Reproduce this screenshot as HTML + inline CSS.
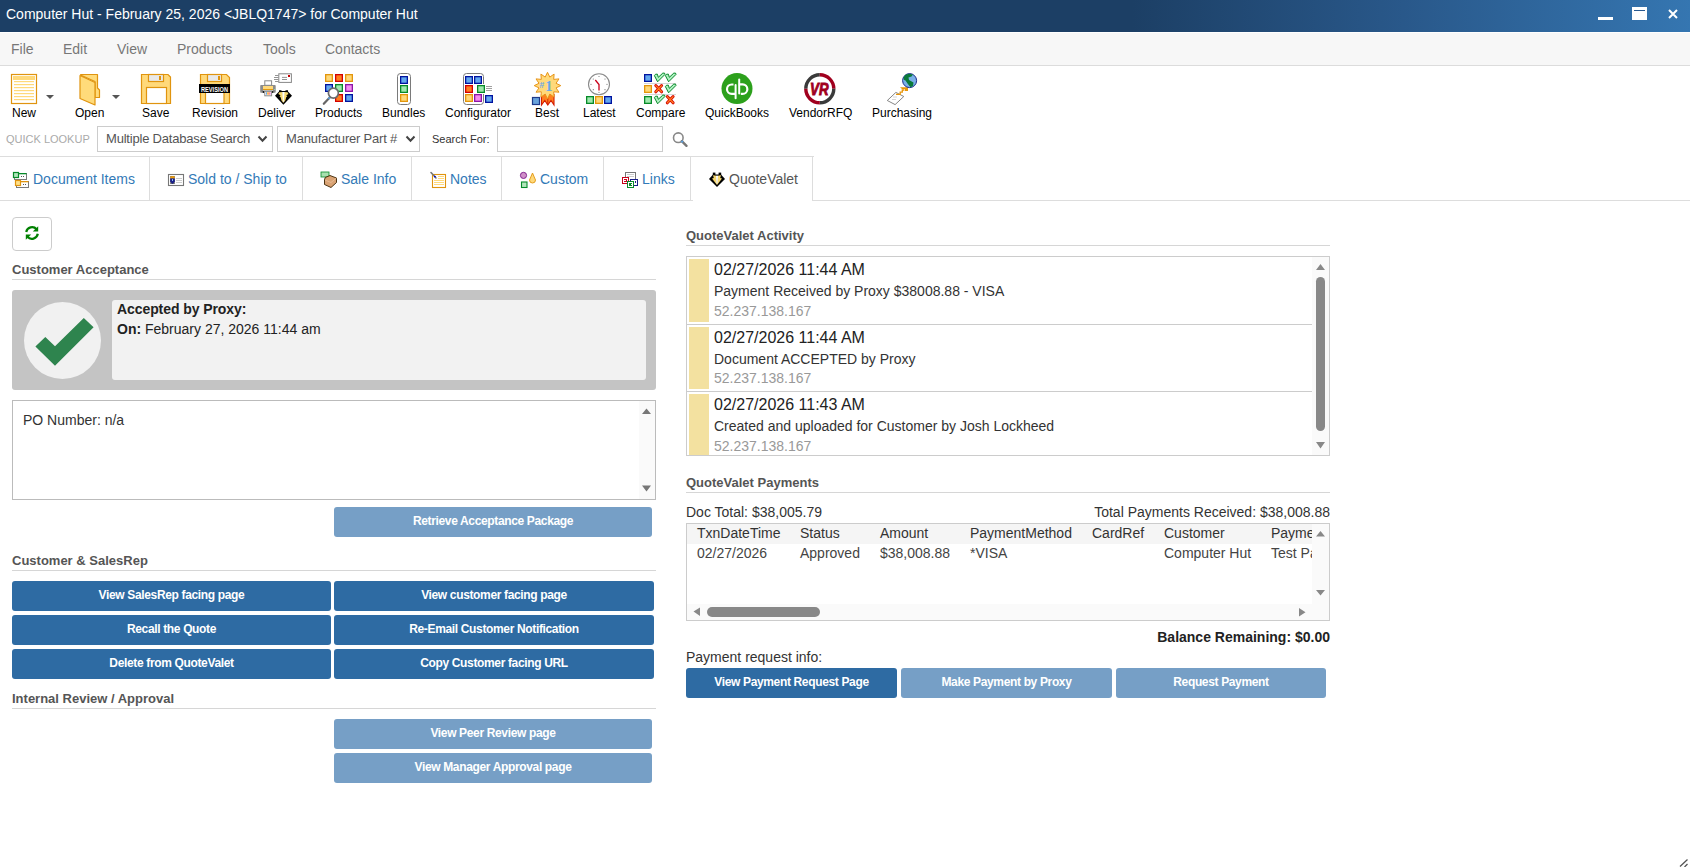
<!DOCTYPE html>
<html><head><meta charset="utf-8">
<style>
*{box-sizing:border-box;margin:0;padding:0}
html,body{width:1690px;height:867px;overflow:hidden;background:#fff;font-family:"Liberation Sans",sans-serif;color:#333;position:relative}
.a{position:absolute;white-space:nowrap}
#title{left:0;top:0;width:1690px;height:32px;background:linear-gradient(90deg,#1c3f65 0%,#1c3f65 67%,#29588a 83%,#3576b1 100%)}
#title .t{left:6px;top:6px;color:#fff;font-size:14px}
#menubar{left:0;top:33px;width:1690px;height:33px;background:#f7f7f7;border-bottom:1px solid #dcdcdc}
.menu{top:8px;font-size:14px;color:#777}
.tb{font-size:12px;color:#000;top:106px}
.ql{font-size:11px;color:#aaa;left:6px;top:133px}
.sel{border:1px solid #ccc;height:26px;top:126px;font-size:13px;color:#555;padding:4px 0 0 8px;background:#fff;letter-spacing:-0.2px}
.chev{top:135px;width:11px;height:8px}
.tabs{left:0;top:156px;width:814px;height:1px;background:#ddd}
.tabline{top:200px;height:1px;background:#ddd}
.tab{top:157px;height:43px;border-right:1px solid #ddd;font-size:14px;color:#337ab7;padding-top:14px}
.h{font-size:13px;font-weight:bold;color:#555}
.hl{height:1px;background:#d6d6d6}
.btn{height:30px;border-radius:3px;color:#fff;font-size:12px;font-weight:bold;text-align:center;padding-top:7px;letter-spacing:-0.35px}
.dk{background:#2e6ba3}
.lt{background:#769fc6}
.act{left:687px;width:625px;height:67px}
.bar{left:689px;width:20px;background:#f3e1a0}
.d16{font-size:16px;color:#222;left:714px}
.d14{font-size:14px;color:#333;left:714px}
.ip{font-size:14px;color:#999;left:714px}
.sep{left:687px;width:625px;height:1px;background:#ccc}
.gh{top:526px;font-size:14px;color:#333}
.gd{top:546px;font-size:14px;color:#444}
</style></head><body>
<div id="title" class="a"><div class="a t">Computer Hut - February 25, 2026 &lt;JBLQ1747&gt; for Computer Hut</div>
<div class="a" style="left:1598px;top:17px;width:15px;height:3px;background:#fff"></div>
<div class="a" style="left:1632px;top:7px;width:15px;height:13px;background:#fff"></div>
<div class="a" style="left:1634px;top:10px;width:11px;height:1px;background:#2a5a90"></div>
<svg class="a" style="left:1666px;top:8px" width="14" height="12" viewBox="0 0 14 12"><path d="M3,2 L11,10 M11,2 L3,10" stroke="#fff" stroke-width="2"/></svg>
</div>
<div id="menubar" class="a">
<div class="a menu" style="left:11px">File</div>
<div class="a menu" style="left:63px">Edit</div>
<div class="a menu" style="left:117px">View</div>
<div class="a menu" style="left:177px">Products</div>
<div class="a menu" style="left:263px">Tools</div>
<div class="a menu" style="left:325px">Contacts</div>
</div>

<svg class="a" style="left:0;top:0" width="1000" height="210" viewBox="0 0 1000 210">

<!-- New -->
<rect x="11.5" y="74.5" width="25" height="29" fill="#fff" stroke="#e0940f" stroke-width="1.2"/>
<rect x="13" y="76" width="22" height="4" fill="#ffd97a"/>
<g fill="#ffd97a"><rect x="14" y="81" width="20" height="1.2"/><rect x="14" y="84" width="20" height="1.2"/><rect x="14" y="87" width="20" height="1.2"/><rect x="14" y="90" width="20" height="1.2"/><rect x="14" y="93" width="20" height="1.2"/><rect x="14" y="96" width="20" height="1.2"/><rect x="14" y="99" width="20" height="1.2"/></g>
<path d="M46,95 H54 L50,99 Z" fill="#555"/>
<!-- Open -->
<path d="M81,74.5 H97.5 V88 L99.5,90 V97.5 H95 V81.5 L80.5,75 Z" fill="#ffdb7a" stroke="#e0940f" stroke-width="1.2" stroke-linejoin="round"/>
<path d="M80,75.5 L95,82.5 V105 L80,98.5 Z" fill="#ffdb7a" stroke="#e0940f" stroke-width="1.2" stroke-linejoin="round"/>
<path d="M112,95 H120 L116,99 Z" fill="#555"/>
<!-- Save -->
<path d="M141.5,74.5 H168 L170.5,77 V103.5 H141.5 Z" fill="#ffd97a" stroke="#e0940f" stroke-width="1.2"/>
<rect x="148.5" y="74.5" width="15" height="7" fill="#e9e9e9" stroke="#e0940f" stroke-width="1.2"/>
<rect x="159" y="76" width="2" height="4" fill="#e0940f"/>
<rect x="146.5" y="87.5" width="20" height="16" fill="#fff" stroke="#e0940f" stroke-width="1.2"/>
<!-- Revision -->
<path d="M200.5,74.5 H226.5 L229.5,77.5 V103.5 H200.5 Z" fill="#ffd97a" stroke="#e0940f" stroke-width="1.2"/>
<rect x="207.5" y="74.5" width="14" height="7" fill="#e9e9e9" stroke="#e0940f" stroke-width="1.2"/>
<rect x="218" y="76" width="2" height="4" fill="#e0940f"/>
<rect x="205.5" y="90" width="18.5" height="13.5" fill="#fff" stroke="#e0940f" stroke-width="1.2"/>
<rect x="199" y="84" width="31" height="9" fill="#000"/>
<text x="201" y="91.6" font-family="Liberation Sans" font-weight="bold" font-size="8" fill="#fff" textLength="27" lengthAdjust="spacingAndGlyphs">REVISION</text>
<!-- Deliver -->
<rect x="264.8" y="80.8" width="6.8" height="4.5" fill="#fff" stroke="#888" stroke-width="1"/>
<rect x="260.2" y="85.1" width="15.5" height="7.7" rx="0.8" fill="#8c8c8c"/>
<rect x="263" y="86" width="10" height="3" fill="#ffd97a"/>
<rect x="263" y="89" width="10" height="1.2" fill="#e39a12"/>
<rect x="263" y="90.2" width="10" height="0.8" fill="#ccc"/>
<circle cx="263.5" cy="92" r="0.9" fill="#111"/><circle cx="272.5" cy="92" r="0.9" fill="#111"/>
<rect x="274.2" y="89" width="1" height="1" fill="#9fe9ae"/>
<rect x="264.8" y="91.3" width="6.8" height="4.5" fill="#fff" stroke="#888" stroke-width="1"/>
<rect x="266" y="92.2" width="1" height="2.5" fill="#63a8ef"/><rect x="267.2" y="92.2" width="1.2" height="2.5" fill="#ffb020"/><rect x="268.5" y="92.2" width="1.2" height="2.5" fill="#ff6a2a"/><rect x="269.7" y="92.2" width="1" height="2.5" fill="#f08ae0"/>
<rect x="278.8" y="73.8" width="12.6" height="8.6" fill="#fff" stroke="#888" stroke-width="1"/>
<rect x="288" y="75" width="2" height="2" fill="#c80000"/>
<g stroke="#888" stroke-width="0.9"><path d="M282,77.4 H287 M282,79.5 H287 M275,75.5 H278.5 M274,77.5 H278.5 M274,79.5 H278.5 M275,81.5 H278.5"/></g>
<path d="M275,95.8 L279,91.5 V90.2 H281.5 V91 H285.5 V90.2 H288 V91.5 L292,95.8 L283.4,104.8 Z" fill="#000"/>
<path d="M279.3,92.3 L282.8,92 L283.4,103 L281.5,100.5 L280.5,97 L279.5,96.5 L280.5,95.3 L278.3,94 Z" fill="#f6d870"/>
<path d="M287.5,92.3 L284,92 L283.4,103 L285.3,100.5 L286.3,97 L287.3,96.5 L286.3,95.3 L288.5,94 Z" fill="#f6d870"/>
<path d="M282.3,92 H284.5 L283.8,102 H283 Z" fill="#fff"/>
<!-- Products -->
<g transform="translate(325,74)"><rect x="0.65" y="0.65" width="6.7" height="6.7" fill="#ffd97a" stroke="#e3960c" stroke-width="1.3"/></g><g transform="translate(335,74)"><rect x="0.65" y="0.65" width="6.7" height="6.7" fill="#ff7f1f" stroke="#d40000" stroke-width="1.3"/></g><g transform="translate(345,74)"><rect x="0.65" y="0.65" width="6.7" height="6.7" fill="#ffd97a" stroke="#e3960c" stroke-width="1.3"/></g>
<g transform="translate(325,84)"><rect x="0.65" y="0.65" width="6.7" height="6.7" fill="#63a8ef" stroke="#00139f" stroke-width="1.3"/></g><g transform="translate(335,84)"><rect x="0.65" y="0.65" width="6.7" height="6.7" fill="#9fe9ae" stroke="#078a29" stroke-width="1.3"/></g><g transform="translate(345,84)"><rect x="0.65" y="0.65" width="6.7" height="6.7" fill="#f58df1" stroke="#8d16a6" stroke-width="1.3"/></g>
<g transform="translate(335,94)"><rect x="0.65" y="0.65" width="6.7" height="6.7" fill="#ff7f1f" stroke="#d40000" stroke-width="1.3"/></g><g transform="translate(345,94)"><rect x="0.65" y="0.65" width="6.7" height="6.7" fill="#63a8ef" stroke="#00139f" stroke-width="1.3"/></g>
<path d="M323.8,103.8 L329.5,97.8" stroke="#666" stroke-width="2.2" stroke-linecap="round"/>
<path d="M328.5,98.8 L330.5,96.5" stroke="#5aa0e0" stroke-width="2"/>
<circle cx="333.4" cy="93.1" r="5" fill="#fff" stroke="#6b6b6b" stroke-width="1.7"/>
<!-- Bundles -->
<rect x="397.5" y="73.5" width="13" height="31" rx="3" fill="none" stroke="#7a7a7a" stroke-width="1"/>
<g transform="translate(400,76)"><rect x="0.65" y="0.65" width="6.7" height="6.7" fill="#63a8ef" stroke="#00139f" stroke-width="1.3"/></g><g transform="translate(400,85)"><rect x="0.65" y="0.65" width="6.7" height="6.7" fill="#9fe9ae" stroke="#078a29" stroke-width="1.3"/></g><g transform="translate(400,94)"><rect x="0.65" y="0.65" width="6.7" height="6.7" fill="#ffd97a" stroke="#e3960c" stroke-width="1.3"/></g>
<!-- Configurator -->
<rect x="463.5" y="73.5" width="20" height="31" rx="3" fill="none" stroke="#7a7a7a" stroke-width="1"/>
<rect x="475" y="84" width="18" height="10" fill="#fff"/>
<rect x="484" y="94" width="10" height="10" fill="#fff"/>
<g transform="translate(465,76)"><rect x="0.65" y="0.65" width="6.7" height="6.7" fill="#63a8ef" stroke="#00139f" stroke-width="1.3"/></g><g transform="translate(474,76)"><rect x="0.65" y="0.65" width="6.7" height="6.7" fill="#63a8ef" stroke="#00139f" stroke-width="1.3"/></g>
<g transform="translate(465,85)"><rect x="0.65" y="0.65" width="6.7" height="6.7" fill="#ff7f1f" stroke="#d40000" stroke-width="1.3"/></g><g transform="translate(477,85)"><rect x="0.65" y="0.65" width="6.7" height="6.7" fill="#9fe9ae" stroke="#078a29" stroke-width="1.3"/></g>
<g transform="translate(465,94)"><rect x="0.65" y="0.65" width="6.7" height="6.7" fill="#ffd97a" stroke="#e3960c" stroke-width="1.3"/></g><g transform="translate(474,94)"><rect x="0.65" y="0.65" width="6.7" height="6.7" fill="#f58df1" stroke="#8d16a6" stroke-width="1.3"/></g><g transform="translate(485,95)"><rect x="0.65" y="0.65" width="6.7" height="6.7" fill="#63a8ef" stroke="#00139f" stroke-width="1.3"/></g>
<g stroke="#888" stroke-width="0.8"><path d="M486,86.5 H492 M486,88.5 H492 M486,90.5 H492"/></g>
<!-- Best -->
<path d="M541.5,94.5 V105 L544.8,100.5 L547.8,105 L551,100.5 L554,105 V94.5 Z" fill="#ff7f1f" stroke="#d41a00" stroke-width="1.1"/>
<path d="M547.8,95 V104" stroke="#d41a00" stroke-width="0.9"/>
<path d="M547.5,72.3 L549.8,77.1 L554.1,74.1 L553.7,79.4 L559.0,78.9 L556.0,83.3 L560.8,85.6 L556.0,87.9 L559.0,92.2 L553.7,91.8 L554.1,97.1 L549.8,94.1 L547.5,98.9 L545.2,94.1 L540.9,97.1 L541.3,91.8 L536.0,92.2 L539.0,87.9 L534.2,85.6 L539.0,83.3 L536.0,78.9 L541.3,79.4 L540.9,74.1 L545.2,77.1 Z" fill="#ffd97a" stroke="#e8961a" stroke-width="1"/>
<rect x="532.5" y="97.5" width="7" height="7" fill="#6aa3db" stroke="#1f3a8a" stroke-width="1.2"/>
<text x="539.5" y="88" font-family="Liberation Sans" font-weight="bold" font-size="8.5" fill="#6aa8e8">#</text><text x="545.3" y="91" font-family="Liberation Serif" font-weight="bold" font-size="14.5" fill="#6aa8e8">1</text>
<!-- Latest -->
<circle cx="599" cy="84.3" r="10.5" fill="#fff" stroke="#8a8a8a" stroke-width="1.1"/>
<g fill="#777"><circle cx="599" cy="76.5" r="0.6"/><circle cx="599" cy="92.3" r="0.6"/><circle cx="591" cy="84.3" r="0.6"/><circle cx="607" cy="84.3" r="0.6"/><circle cx="593.3" cy="79" r="0.6"/><circle cx="605" cy="79" r="0.6"/><circle cx="593.3" cy="89.7" r="0.6"/><circle cx="605" cy="89.7" r="0.6"/></g>
<path d="M599,90.5 V84.5 L595.3,80" stroke="#c8001a" stroke-width="1.3" fill="none"/>
<g transform="translate(586,96)"><rect x="0.65" y="0.65" width="6.7" height="6.7" fill="#9fe9ae" stroke="#078a29" stroke-width="1.3"/></g><g transform="translate(595,96)"><rect x="0.65" y="0.65" width="6.7" height="6.7" fill="#ffd97a" stroke="#e3960c" stroke-width="1.3"/></g><g transform="translate(604,96)"><rect x="0.65" y="0.65" width="6.7" height="6.7" fill="#63a8ef" stroke="#00139f" stroke-width="1.3"/></g>
<!-- Compare -->
<g transform="translate(644,74)"><rect x="0.65" y="0.65" width="6.7" height="6.7" fill="#63a8ef" stroke="#00139f" stroke-width="1.3"/></g><g transform="translate(644,85)"><rect x="0.65" y="0.65" width="6.7" height="6.7" fill="#ffd97a" stroke="#e3960c" stroke-width="1.3"/></g><g transform="translate(644,96)"><rect x="0.65" y="0.65" width="6.7" height="6.7" fill="#9fe9ae" stroke="#078a29" stroke-width="1.3"/></g>
<rect x="644" y="83.2" width="32" height="0.8" fill="#ccc"/><rect x="644" y="94.1" width="32" height="0.8" fill="#ccc"/>
<g transform="translate(654,73)"><path d="M0.4,2.6 L1.6,1.2 H3.4 L4.3,4.3 L8.8,0.1 H10.5 L11,1.4 L3.6,8.8 Z" fill="#aef0c0" stroke="#078a29" stroke-width="1" stroke-linejoin="round"/></g><g transform="translate(665,73)"><path d="M0.4,2.6 L1.6,1.2 H3.4 L4.3,4.3 L8.8,0.1 H10.5 L11,1.4 L3.6,8.8 Z" fill="#aef0c0" stroke="#078a29" stroke-width="1" stroke-linejoin="round"/></g>
<g transform="translate(654,84)"><path d="M1.8,1.6 L7.6,7.8 M7.6,1.6 L1.8,7.8" stroke="#d40000" stroke-width="3" stroke-linecap="round"/><path d="M1.8,1.6 L7.6,7.8 M7.6,1.6 L1.8,7.8" stroke="#ff8020" stroke-width="1.3" stroke-linecap="round"/></g><g transform="translate(665,84)"><path d="M0.4,2.6 L1.6,1.2 H3.4 L4.3,4.3 L8.8,0.1 H10.5 L11,1.4 L3.6,8.8 Z" fill="#aef0c0" stroke="#078a29" stroke-width="1" stroke-linejoin="round"/></g>
<g transform="translate(654,95)"><path d="M0.4,2.6 L1.6,1.2 H3.4 L4.3,4.3 L8.8,0.1 H10.5 L11,1.4 L3.6,8.8 Z" fill="#aef0c0" stroke="#078a29" stroke-width="1" stroke-linejoin="round"/></g><g transform="translate(665.5,95)"><path d="M1.8,1.6 L7.6,7.8 M7.6,1.6 L1.8,7.8" stroke="#d40000" stroke-width="3" stroke-linecap="round"/><path d="M1.8,1.6 L7.6,7.8 M7.6,1.6 L1.8,7.8" stroke="#ff8020" stroke-width="1.3" stroke-linecap="round"/></g>
<!-- QuickBooks -->
<circle cx="737" cy="88.6" r="15.5" fill="#2ca01c"/>
<g fill="none" stroke="#fff" stroke-width="2.2"><path d="M735.6,93.9 H731.7 A4.7,4.7 0 0 1 731.7,84.5 H733.5"/><path d="M738.8,84.4 H742.6 A4.7,4.7 0 0 1 742.6,93.9 H740.8"/></g>
<g stroke="#fff" stroke-width="2" stroke-linecap="round"><path d="M735.6,85 V98.3"/><path d="M739.2,79.5 V93.5"/></g>
<!-- VendorRFQ -->
<g fill="none" stroke-width="3.4">
<path d="M805.8,88.8 A14,14 0 0 1 819.8,74.8" stroke="#3a3a3a"/>
<path d="M819.8,74.8 A14,14 0 0 1 833.8,88.8" stroke="#a0001e"/>
<path d="M833.8,88.8 A14,14 0 0 1 819.8,102.8" stroke="#3a3a3a"/>
<path d="M819.8,102.8 A14,14 0 0 1 805.8,88.8" stroke="#a0001e"/>
</g>
<text x="810" y="95.2" font-family="Liberation Sans" font-weight="bold" font-style="italic" font-size="17" fill="#a0001e" stroke="#a0001e" stroke-width="0.9" textLength="18.5" lengthAdjust="spacingAndGlyphs">VR</text>
<!-- Purchasing -->
<path d="M887.3,100.5 L895.9,92.4 L903.8,96.5 L895.1,104.6 Z" fill="#fff" stroke="#777" stroke-width="0.9"/>
<g stroke="#ccc" stroke-width="0.8"><path d="M893,97 H897 M892,99.5 H896"/></g>
<path d="M896,94.3 H900.2 V92.2 H902.3 V90 H904.5" fill="none" stroke="#e8960a" stroke-width="1.3"/><path d="M900,87.2 H908 V91 H905 V89 L902,89 Z" fill="#e8960a"/>
<circle cx="909.6" cy="80.6" r="7" fill="#7ab0e8" stroke="#1a2a8a" stroke-width="1"/>
<path d="M903.5,78 L905,75 L909,73.8 L913,74.5 L911.5,76.5 L908.5,77.5 L909,80 L913.5,82.5 L913,86 L910.5,87.3 L907.5,83.5 L905.5,80.5 L904,80 Z" fill="#0a7a3a"/>
</svg>


<div class="a tb" style="left:12px">New</div>
<div class="a tb" style="left:75px">Open</div>
<div class="a tb" style="left:142px">Save</div>
<div class="a tb" style="left:192px">Revision</div>
<div class="a tb" style="left:258px">Deliver</div>
<div class="a tb" style="left:315px">Products</div>
<div class="a tb" style="left:382px">Bundles</div>
<div class="a tb" style="left:445px">Configurator</div>
<div class="a tb" style="left:535px">Best</div>
<div class="a tb" style="left:583px">Latest</div>
<div class="a tb" style="left:636px">Compare</div>
<div class="a tb" style="left:705px">QuickBooks</div>
<div class="a tb" style="left:789px">VendorRFQ</div>
<div class="a tb" style="left:872px">Purchasing</div>

<div class="a ql">QUICK LOOKUP</div>
<div class="a sel" style="left:97px;width:176px">Multiple Database Search</div>
<svg class="a chev" style="left:257px" viewBox="0 0 11 8"><path d="M1.5,1.5 L5.5,5.8 L9.5,1.5" fill="none" stroke="#444" stroke-width="2"/></svg>
<div class="a sel" style="left:277px;width:143px">Manufacturer Part #</div>
<svg class="a chev" style="left:405px" viewBox="0 0 11 8"><path d="M1.5,1.5 L5.5,5.8 L9.5,1.5" fill="none" stroke="#444" stroke-width="2"/></svg>
<div class="a" style="left:432px;top:133px;font-size:11px;color:#333">Search For:</div>
<div class="a" style="left:497px;top:126px;width:166px;height:26px;border:1px solid #ccc"></div>
<svg class="a" style="left:670px;top:130px" width="20" height="18" viewBox="0 0 20 18"><circle cx="8.3" cy="7.7" r="4.8" fill="none" stroke="#888" stroke-width="1.6"/><path d="M11.8,11.2 L16.5,15.8" stroke="#777" stroke-width="2.4" stroke-linecap="round"/><path d="M11.5,11 L12.8,12.3" stroke="#5aa0e0" stroke-width="2"/></svg>

<div class="a tabs"></div>
<div class="a tabline" style="left:0;width:693px"></div>
<div class="a tabline" style="left:812px;width:878px"></div>
<div class="a tab" style="left:0;width:150px;padding-left:33px">Document Items</div>
<div class="a tab" style="left:150px;width:153px;padding-left:38px">Sold to / Ship to</div>
<div class="a tab" style="left:303px;width:109px;padding-left:38px">Sale Info</div>
<div class="a tab" style="left:412px;width:90px;padding-left:38px">Notes</div>
<div class="a tab" style="left:502px;width:102px;padding-left:38px">Custom</div>
<div class="a tab" style="left:604px;width:87px;padding-left:38px">Links</div>
<div class="a tab" style="left:691px;width:122px;padding-left:38px;color:#555">QuoteValet</div>
<div class="a" style="left:690px;top:157px;width:1px;height:44px;background:#ddd"></div>

<svg class="a" style="left:0;top:160px" width="760" height="40" viewBox="0 160 760 40">
<!-- Document Items -->
<rect x="14.5" y="173.5" width="12" height="6" fill="#fff" stroke="#7a7a7a" stroke-width="1"/>
<rect x="18" y="173" width="8.5" height="1.3" fill="#078a29"/>
<rect x="13.5" y="172.5" width="5" height="5" fill="#b2e5bc" stroke="#078a29" stroke-width="1.2"/>
<rect x="21" y="176" width="1" height="1" fill="#555"/><rect x="23" y="176" width="1" height="1" fill="#555"/>
<rect x="16.5" y="181.5" width="12" height="6" fill="#fff" stroke="#7a7a7a" stroke-width="1"/>
<rect x="20" y="181" width="8.5" height="1.3" fill="#e0940f"/>
<rect x="15.5" y="180.5" width="5" height="5" fill="#ffe08a" stroke="#e0940f" stroke-width="1.2"/>
<rect x="23" y="184" width="1" height="1" fill="#555"/><rect x="25" y="184" width="1" height="1" fill="#555"/>
<!-- Sold to -->
<rect x="168.5" y="174.5" width="15" height="11" fill="#fff" stroke="#777" stroke-width="1.1"/>
<path d="M170.2,176 H174.8 V184 H170.2 Z" fill="#666"/>
<path d="M170.2,176.5 L172.5,176 L174.8,176.5 V178.5 H170.2 Z" fill="#e89a10"/>
<path d="M170.2,178.6 H174.8 V181.5 L172.5,184 L170.2,181.5 Z" fill="#1a1f8a"/>
<rect x="172" y="179" width="1" height="2" fill="#8ac0f0"/>
<g fill="#ccc"><rect x="176" y="178" width="6" height="1"/><rect x="176" y="180" width="6" height="1"/><rect x="176" y="182" width="6" height="1"/></g>
<!-- Sale Info -->
<rect x="321" y="172" width="8" height="5" fill="#a8e0b0" stroke="#078a29" stroke-width="0.8"/>
<path d="M325.2,177.5 L330,175.5 L336.5,178 V182.5 L331,187.5 L324.5,184.5 V180 Z" fill="#d9a273" stroke="#3a2200" stroke-width="0.9"/>
<path d="M325,180 L331,182.5 L336.5,178" fill="none" stroke="#e8c09a" stroke-width="0.8"/>
<!-- Notes -->
<rect x="432.5" y="174.5" width="13" height="13" fill="#fff" stroke="#e0940f" stroke-width="1.1"/>
<g fill="#ffd97a"><rect x="438" y="176" width="6" height="1"/><rect x="438" y="178" width="6" height="1"/><rect x="434" y="180" width="10" height="1"/><rect x="434" y="182" width="10" height="1"/><rect x="434" y="184" width="10" height="1"/></g>
<path d="M431,172.5 L436,178" stroke="#777" stroke-width="1.6" stroke-linecap="round"/>
<path d="M434.3,176 L435.5,177.3" stroke="#0000c0" stroke-width="1.4"/>
<!-- Custom -->
<circle cx="523.5" cy="175.4" r="3.1" fill="#d090c8" stroke="#7a1a8a" stroke-width="0.9"/>
<rect x="521.5" y="182" width="5.5" height="5.5" fill="#b2e5bc" stroke="#078a29" stroke-width="1.1"/>
<path d="M532.5,173 L535.5,180 A2.9,2.9 0 1 1 529.5,180 Z" fill="#ffd97a" stroke="#e0940f" stroke-width="0.9"/>
<!-- Links -->
<rect x="625" y="172" width="11" height="8" fill="#777"/><rect x="626" y="173" width="9" height="7" fill="#fff"/>
<g fill="#ccc"><rect x="627" y="174" width="7" height="1"/><rect x="627" y="176" width="7" height="1"/></g>
<rect x="630" y="179" width="8" height="7" fill="#1a1f8a"/><rect x="631" y="180" width="6" height="5" fill="#fff"/>
<rect x="635" y="181" width="1" height="2" fill="#1a1f8a"/>
<rect x="622" y="177" width="7" height="7" fill="#c8001a"/><rect x="623" y="178" width="5" height="5" fill="#fff"/>
<rect x="624" y="179" width="3" height="1" fill="#c8001a"/><rect x="624" y="181" width="3" height="1" fill="#c8001a"/><rect x="626" y="179" width="1" height="3" fill="#c8001a"/>
<rect x="627" y="181" width="7" height="7" fill="#078a29"/><rect x="628" y="182" width="5" height="5" fill="#fff"/>
<rect x="629" y="183" width="3" height="3" fill="#078a29"/><rect x="631" y="184" width="1" height="1" fill="#fff"/>
<!-- QuoteValet -->
<path d="M709,178.9 L713,174.5 H721 L725,178.9 L717,186.9 Z" fill="#000"/>
<rect x="712.8" y="172.6" width="2.6" height="3" fill="#000"/><rect x="718.6" y="172.6" width="2.6" height="3" fill="#000"/>
<path d="M713,175.3 L716.5,175.8 L717,185 L712,178.5 L713.8,178 Z" fill="#f6d870"/>
<path d="M721,175.3 L717.5,175.8 L717,185 L722,178.5 L720.2,178 Z" fill="#f6d870"/>
<path d="M716,175.8 H718 L717.5,183.5 H716.5 Z" fill="#fff"/>
</svg>


<!-- left column -->
<div class="a" style="left:12px;top:217px;width:40px;height:34px;border:1px solid #ccc;border-radius:4px"></div>
<svg class="a" style="left:24px;top:225px" width="16" height="16" viewBox="0 0 16 16"><path d="M2.2,7 A6,6 0 0 1 12.6,4.2" fill="none" stroke="#008000" stroke-width="2.2"/><path d="M14.2,1.2 V6.6 H8.8 Z" fill="#008000"/><path d="M13.8,8.8 A6,6 0 0 1 3.4,11.8" fill="none" stroke="#008000" stroke-width="2.2"/><path d="M1.8,14.8 V9.4 H7.2 Z" fill="#008000"/></svg>
<div class="a h" style="left:12px;top:262px">Customer Acceptance</div>
<div class="a hl" style="left:12px;top:279px;width:644px"></div>
<div class="a" style="left:12px;top:290px;width:644px;height:100px;background:#c4c4c4;border-radius:3px"></div>
<div class="a" style="left:24px;top:302px;width:77px;height:77px;background:#f1f1f1;border-radius:50%"></div>
<svg class="a" style="left:30px;top:312px" width="70" height="60" viewBox="30 312 70 60"><path d="M35.4,346.5 L45.3,336.9 L55,346.2 L83.8,318 L93.6,327.2 L55,365.7 Z" fill="#2e844e"/></svg>
<div class="a" style="left:112px;top:300px;width:534px;height:80px;background:#f2f2f2;border-radius:3px"></div>
<div class="a" style="left:117px;top:301px;font-size:14px;font-weight:bold;color:#222;letter-spacing:-0.08px">Accepted by Proxy:</div>
<div class="a" style="left:117px;top:321px;font-size:14px;color:#222"><b>On:</b> February 27, 2026 11:44 am</div>
<div class="a" style="left:12px;top:400px;width:644px;height:100px;border:1px solid #bbb"></div>
<div class="a" style="left:639px;top:401px;width:16px;height:98px;background:#fafafa"></div>
<svg class="a" style="left:640px;top:404px" width="14" height="90" viewBox="0 0 14 90"><path d="M2,10 H11 L6.5,4.5 Z M2,81.5 H11 L6.5,87.5 Z" fill="#777"/></svg>
<div class="a" style="left:23px;top:412px;font-size:14px;color:#333">PO Number: n/a</div>
<div class="a btn lt" style="left:334px;top:507px;width:318px">Retrieve Acceptance Package</div>

<div class="a h" style="left:12px;top:553px">Customer &amp; SalesRep</div>
<div class="a hl" style="left:12px;top:570px;width:644px"></div>
<div class="a btn dk" style="left:12px;top:581px;width:319px">View SalesRep facing page</div>
<div class="a btn dk" style="left:334px;top:581px;width:320px">View customer facing page</div>
<div class="a btn dk" style="left:12px;top:615px;width:319px">Recall the Quote</div>
<div class="a btn dk" style="left:334px;top:615px;width:320px">Re-Email Customer Notification</div>
<div class="a btn dk" style="left:12px;top:649px;width:319px">Delete from QuoteValet</div>
<div class="a btn dk" style="left:334px;top:649px;width:320px">Copy Customer facing URL</div>

<div class="a h" style="left:12px;top:691px">Internal Review / Approval</div>
<div class="a hl" style="left:12px;top:708px;width:644px"></div>
<div class="a btn lt" style="left:334px;top:719px;width:318px">View Peer Review page</div>
<div class="a btn lt" style="left:334px;top:753px;width:318px">View Manager Approval page</div>

<!-- right column -->
<div class="a h" style="left:686px;top:228px">QuoteValet Activity</div>
<div class="a hl" style="left:686px;top:245px;width:644px"></div>
<div class="a" style="left:686px;top:256px;width:644px;height:200px;border:1px solid #ccc"></div>
<div class="a bar" style="top:259px;height:63px"></div>
<div class="a d16" style="top:261px">02/27/2026 11:44 AM</div>
<div class="a d14" style="top:283px">Payment Received by Proxy $38008.88 - VISA</div>
<div class="a ip" style="top:303px">52.237.138.167</div>
<div class="a sep" style="top:324px"></div>
<div class="a bar" style="top:327px;height:62px"></div>
<div class="a d16" style="top:329px">02/27/2026 11:44 AM</div>
<div class="a d14" style="top:351px">Document ACCEPTED by Proxy</div>
<div class="a ip" style="top:370px">52.237.138.167</div>
<div class="a sep" style="top:391px"></div>
<div class="a bar" style="top:394px;height:61px"></div>
<div class="a d16" style="top:396px">02/27/2026 11:43 AM</div>
<div class="a d14" style="top:418px">Created and uploaded for Customer by Josh Lockheed</div>
<div class="a ip" style="top:438px">52.237.138.167</div>
<div class="a" style="left:1312px;top:257px;width:17px;height:198px;background:#fafafa"></div>
<div class="a" style="left:1316px;top:277px;width:9px;height:154px;background:#888;border-radius:4.5px"></div>
<svg class="a" style="left:1314px;top:262px" width="14" height="190" viewBox="0 0 14 190"><path d="M2,8 H11 L6.5,2 Z M2,180 H11 L6.5,186.5 Z" fill="#888"/></svg>

<div class="a h" style="left:686px;top:475px">QuoteValet Payments</div>
<div class="a hl" style="left:686px;top:492px;width:644px"></div>
<div class="a" style="left:686px;top:504px;font-size:14px">Doc Total: $38,005.79</div>
<div class="a" style="left:1000px;top:504px;width:330px;text-align:right;font-size:14px">Total Payments Received: $38,008.88</div>
<div class="a" style="left:686px;top:523px;width:644px;height:98px;border:1px solid #ccc;overflow:hidden">
  <div class="a" style="left:0;top:0;width:625px;height:20px;background:#f5f5f5"></div>
  <div class="a" style="left:0;top:80px;width:625px;height:17px;background:#fafafa"></div>
  <div class="a" style="left:625px;top:0;width:18px;height:97px;background:#fafafa"></div>
  <div class="a" style="left:0;top:0;width:625px;height:80px;overflow:hidden">
    <div class="a gh" style="left:10px;top:1px">TxnDateTime</div>
    <div class="a gh" style="left:113px;top:1px">Status</div>
    <div class="a gh" style="left:193px;top:1px">Amount</div>
    <div class="a gh" style="left:283px;top:1px">PaymentMethod</div>
    <div class="a gh" style="left:405px;top:1px">CardRef</div>
    <div class="a gh" style="left:477px;top:1px">Customer</div>
    <div class="a gh" style="left:584px;top:1px">PaymentDescription</div>
    <div class="a gd" style="left:10px;top:21px">02/27/2026</div>
    <div class="a gd" style="left:113px;top:21px">Approved</div>
    <div class="a gd" style="left:193px;top:21px">$38,008.88</div>
    <div class="a gd" style="left:283px;top:21px">*VISA</div>
    <div class="a gd" style="left:477px;top:21px">Computer Hut</div>
    <div class="a gd" style="left:584px;top:21px">Test Payment</div>
  </div>
  <div class="a" style="left:20px;top:83px;width:113px;height:9.5px;background:#888;border-radius:5px"></div>
  <svg class="a" style="left:0;top:0" width="643" height="97" viewBox="0 0 643 97"><path d="M6.5,87.5 L13,83.5 V92 Z M612,84 V92.5 L618.5,88.25 Z M629,12.5 H638 L633.5,7 Z M629,66 H638 L633.5,71.5 Z" fill="#888"/></svg>
</div>
<div class="a" style="left:1000px;top:629px;width:330px;text-align:right;font-size:14px;font-weight:bold;color:#222">Balance Remaining: $0.00</div>
<div class="a" style="left:686px;top:649px;font-size:14px">Payment request info:</div>
<div class="a btn dk" style="left:686px;top:668px;width:211px">View Payment Request Page</div>
<div class="a btn lt" style="left:901px;top:668px;width:211px">Make Payment by Proxy</div>
<div class="a btn lt" style="left:1116px;top:668px;width:210px">Request Payment</div>
<svg class="a" style="left:1676px;top:852px" width="14" height="15" viewBox="0 0 14 15"><path d="M4,14.5 L11.5,7.5 M8.5,15 L11.5,12" stroke="#555" stroke-width="1.3"/></svg>
</body></html>
